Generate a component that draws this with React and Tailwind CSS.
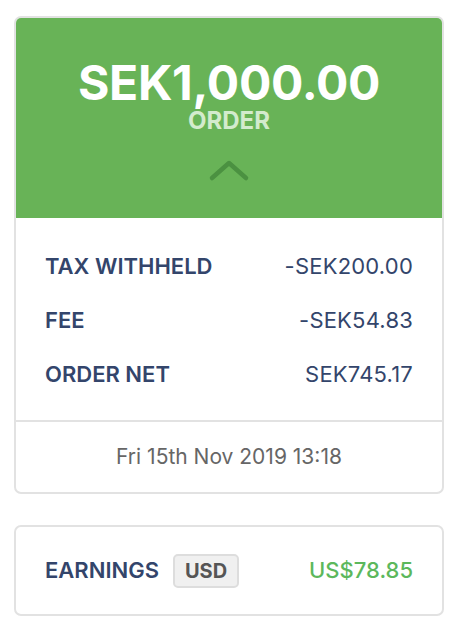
import React from 'react'

const ROWS = [
  { label: 'TAX WITHHELD', value: '-SEK200.00' },
  { label: 'FEE', value: '-SEK54.83' },
  { label: 'ORDER NET', value: 'SEK745.17' },
]

function ChevronUp() {
  return (
    <svg width="42" height="24" viewBox="0 0 42 24" fill="none">
      <path d="M4 20 L21 5 L38 20" stroke="#4b9141" strokeWidth="4.5" strokeLinecap="round" strokeLinejoin="round" />
    </svg>
  )
}

export default function App() {
  return (
    <div className="min-h-screen bg-white pl-[14px] pt-[16px] font-['Inter','Lato',sans-serif]">
      {/* ── order card ── */}
      <div className="w-[430px] rounded-[7px] border-2 border-[#e2e2e2] overflow-hidden">
        <div className="bg-[#68b357] -m-[2px] mb-0 rounded-t-[7px] h-[202px] flex flex-col items-center pt-[44px]">
          <div className="text-white font-bold text-[48px] leading-[46px] tracking-[-0.3px]">SEK1,000.00</div>
          <div className="text-[#d3ebcd] font-bold text-[24px] leading-[24px] mt-[3px]">ORDER</div>
          <div className="mt-[25px]">
            <ChevronUp />
          </div>
        </div>

        <div className="px-[29px] pt-[21px] pb-[19px] flex flex-col">
          {ROWS.map(({ label, value }) => (
            <div key={label} className="h-[54px] flex items-center justify-between">
              <span className="text-[#33456b] font-semibold text-[22px]">{label}</span>
              <span className="text-[#33456b] text-[22px] tracking-[0.2px]">{value}</span>
            </div>
          ))}
        </div>

        <div className="border-t-2 border-[#e2e2e2] h-[72px] flex items-center justify-center">
          <span className="text-[#666666] text-[21px]">Fri 15th Nov 2019 13:18</span>
        </div>
      </div>

      {/* ── earnings card ── */}
      <div className="w-[430px] mt-[31px] rounded-[7px] border-2 border-[#e2e2e2] h-[91px] px-[29px] flex items-center justify-between">
        <div className="flex items-center gap-[14px]">
          <span className="text-[#33456b] font-semibold text-[22px]">EARNINGS</span>
          <span className="bg-[#f0f0f0] border-2 border-[#dddddd] rounded-[5px] px-[10px] h-[34px] flex items-center text-[#555555] font-bold text-[20px]">USD</span>
        </div>
        <span className="text-[#5cb85c] font-medium text-[22px]">US$78.85</span>
      </div>
    </div>
  )
}
